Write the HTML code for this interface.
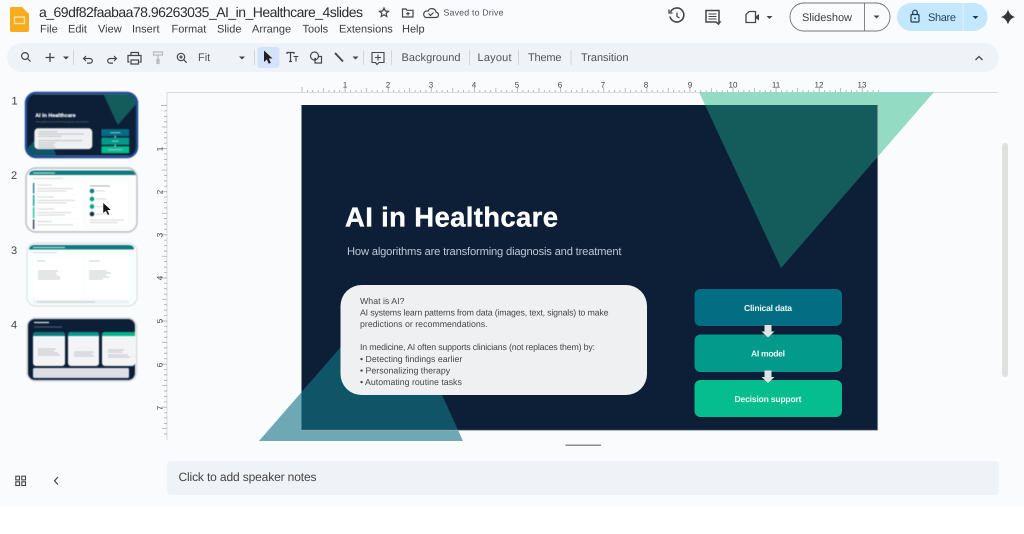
<!DOCTYPE html>
<html><head><meta charset="utf-8"><style>
html,body{margin:0;padding:0;background:#fff;width:1024px;height:534px;overflow:hidden}
svg{display:block}
#root{filter:blur(.3px)}
.soft{filter:blur(.45px)}
text{font-family:"Liberation Sans",sans-serif;fill:#3c4043;text-rendering:geometricPrecision}
.i{fill:none;stroke:#444746;stroke-width:1.2}
.m{font-size:11px;fill:#3a3d40}
.t{font-size:11px;fill:#50545a}
.r{font-size:8px;fill:#444;text-anchor:middle}
.b{font-size:8.8px;fill:#44474a}
.f{font-weight:bold;font-size:8.6px;fill:#e8f6f3;text-anchor:middle}
.n{font-size:12px;fill:#444}
</style></head><body>
<svg id="root" width="1024" height="534" viewBox="0 0 1024 534" xmlns="http://www.w3.org/2000/svg">
<defs>
<pattern id="hr" x="301.5" y="87" width="43.1" height="6" patternUnits="userSpaceOnUse">
<path d="M.5 0V5M5.900 3V5M11.300 3V5M16.700 3V5M22 1V5M27.400 3V5M32.800 3V5M38.200 3V5" stroke="#9a9da0" stroke-width=".7"/>
</pattern>
<pattern id="vr" x="161" y="105" width="6" height="43.1" patternUnits="userSpaceOnUse">
<path d="M0 .5H6M3 5.900H6M3 11.300H6M3 16.700H6M1 22H6M3 27.400H6M3 32.800H6M3 38.200H6" stroke="#9a9da0" stroke-width=".7"/>
</pattern>
<clipPath id="sl"><rect x="301.500" y="105" width="576" height="325"/></clipPath>
<clipPath id="c1"><rect x="0" y="0" width="576" height="325" rx="36"/></clipPath>
</defs>
<rect width="1024" height="507" fill="#f9fbfd"/>

<!-- logo -->
<path d="M10 8.500Q10 7 11.500 7H22L29 14V30Q29 32 27 32H12Q10 32 10 30Z" fill="#f7ab1e"/>
<rect x="14.500" y="17" width="10" height="6.500" fill="none" stroke="#fde3a5" stroke-width="1.400"/>

<!-- title -->
<text x="39" y="17" font-size="14" textLength="324" style="fill:#2a2c2e">a_69df82faabaa78.96263035_AI_in_Healthcare_4slides</text>
<path d="M384 8l1.300 3 3.200.3-2.400 2.100.7 3.100-2.800-1.700-2.800 1.700.7-3.100-2.400-2.100 3.200-.3z" class="i"/>
<path d="M402.500 9h3.500l1 1.300h6v6.700h-10.500z" class="i"/><path d="M408 12v3.500M406.200 13.700h3.600" class="i" stroke-width="1"/>
<path d="M426 17.500h9.500a2.700 2.700 0 0 0 .5-5.400 4.200 4.200 0 0 0-8-1 3.300 3.300 0 0 0-2 6.400zM428.500 13.500l2 2 3-3" class="i" stroke-width="1"/>
<text x="443.500" y="15.500" font-size="8.800" textLength="60" style="fill:#50545a">Saved to Drive</text>

<!-- menus -->
<text class="m" x="40" y="32.500">File</text>
<text class="m" x="68" y="32.500">Edit</text>
<text class="m" x="98" y="32.500">View</text>
<text class="m" x="132" y="32.500">Insert</text>
<text class="m" x="171.500" y="32.500">Format</text>
<text class="m" x="217" y="32.500">Slide</text>
<text class="m" x="252" y="32.500">Arrange</text>
<text class="m" x="302.500" y="32.500">Tools</text>
<text class="m" x="339" y="32.500">Extensions</text>
<text class="m" x="402" y="32.500">Help</text>

<!-- top right -->
<g fill="none" stroke="#444746" stroke-width="1.600">
<path d="M670.500 12a7 7 0 1 1-.5 4.500"/><path d="M669 9.500v3.500h3.500" stroke-width="1.300"/><path d="M677 12.500v4l2.500 1.500" stroke-width="1.300"/>
<path d="M706 10.500h13v11.500h1l-1.500 2-2.500-2h-10z" stroke-width="1.500"/><path d="M708.500 14h8M708.500 16.500h8M708.500 19h8" stroke-width="1"/>
<path d="M749 11.500h6.500v11h-9.500v-8z" stroke-width="1.300"/></g>
<path d="M755.500 16.500l3.500-2.500v6.500l-3.500-2.500z" fill="#444746"/>
<path d="M766.500 16l3 3 3-3z" fill="#444746"/>
<rect x="790" y="3" width="100" height="28" rx="14" fill="#f9fbfd" stroke="#747775" stroke-width=".9"/>
<path d="M864.500 3v28" stroke="#747775" stroke-width=".9"/>
<text x="802" y="21" font-size="11" textLength="50" style="fill:#3c4043">Slideshow</text>
<path d="M873.500 15.500l3 3 3-3z" fill="#444746"/>
<rect x="897" y="3" width="90.500" height="28" rx="14" fill="#c2e7ff"/>
<path d="M963 3v28" stroke="#e6f4ff" stroke-width=".9"/>
<rect x="911" y="14.500" width="8" height="7.500" rx="1" fill="none" stroke="#1f3b52" stroke-width="1.200"/>
<path d="M912.700 14.500v-2a2.300 2.300 0 0 1 4.600 0v2" fill="none" stroke="#1f3b52" stroke-width="1.200"/>
<circle cx="915" cy="18.300" r=".9" fill="#1f3b52"/>
<text x="928" y="21" font-size="11" textLength="28" style="fill:#26455c">Share</text>
<path d="M972.500 16l3 3 3-3z" fill="#1f3b52"/>
<path d="M1008 9.500c1.200 4 3.200 6.200 7 7.500-3.800 1.300-5.800 3.500-7 7.500-1.200-4-3.200-6.200-7-7.500 3.800-1.300 5.800-3.500 7-7.500z" fill="#33363a"/>

<!-- toolbar -->
<rect x="7" y="43" width="992" height="29" rx="14.500" fill="#eff3f8"/>
<rect x="257.500" y="47" width="22" height="21" rx="3" fill="#d3e3fd"/>
<g fill="none" stroke="#444746" stroke-width="1.200">
<circle cx="25" cy="56" r="3.400"/><path d="M27.500 58.500l3 3"/>
<path d="M45.500 57.500h9M50 53v9" stroke-width="1.300"/>
<path d="M84 58.500h6a2.300 2.300 0 0 1 0 4.600h-3M86 56l-2.500 2.500 2.500 2.500"/>
<path d="M116 58.500h-6a2.300 2.300 0 0 0 0 4.600h3M114 56l2.500 2.500-2.500 2.500"/>
<path d="M131 55.500v-3h7.500v3M129.500 62h-1.500v-6.500h13v6.500h-1.500M131 60h7.500v4h-7.500z"/>
<path d="M153.500 52h9v3h-9zM158 55v2.500M158 57.500v5" stroke="#b6b9bd"/><rect x="157" y="59.500" width="2" height="4" stroke="#b6b9bd"/>
<circle cx="181" cy="57" r="3.700"/><path d="M183.700 59.700l3 3M179.300 57h3.400M181 55.300v3.400"/>
<path d="M287 54v-1.500h7v1.500M290.500 52.500v9M289 61.500h3" stroke-width="1.200"/><path d="M293.500 56.500h4.800M296 56.500v5" stroke-width="1.100"/>
<circle cx="314.500" cy="56" r="4"/><path d="M316 58.500h-1v4.500h6.500v-6.500h-2.500"/>
<path d="M335 53l8 8.500" stroke-width="1.900"/>
<path d="M372 52.500h12v10h-5l-2 2-1.500-2h-3.500zM378 54.500v6M375 57.500h6" stroke-width="1.100"/>
<path d="M975.500 60l3.500-3.500 3.500 3.500" stroke-width="1.300"/>
</g>
<path d="M63 56.500l3 3 3-3zM239 56.500l3 3 3-3zM352.500 56.500l3 3 3-3z" fill="#444746"/>
<path d="M264 51l0 11.500 2.800-2.600 2 4.300 2-1-2-4.200h3.700z" fill="#1f1f1f" transform="translate(0,-.5)"/>
<g stroke="#d3d6da" stroke-width="1"><path d="M73.500 50v15M254.500 50v15M363.500 50v15M391.500 50v15M469.500 50v15M518.500 50v15M571 50v15"/></g>
<text class="t" x="198" y="61">Fit</text>
<text class="t" x="401.500" y="61" textLength="59">Background</text>
<text class="t" x="477.500" y="61" textLength="34">Layout</text>
<text class="t" x="528" y="61" textLength="33.500">Theme</text>
<text class="t" x="581" y="61" textLength="47.500">Transition</text>

<!-- rulers -->
<path d="M167 92.500H998M167 92v348" stroke="#d8dadd" stroke-width="1" fill="none"/>
<rect x="301.500" y="87" width="578" height="5" fill="url(#hr)"/>
<rect x="161" y="105" width="6" height="332" fill="url(#vr)"/>
<g>
<text class="r" x="345" y="87.500">1</text><text class="r" x="388" y="87.500">2</text><text class="r" x="431" y="87.500">3</text><text class="r" x="474" y="87.500">4</text><text class="r" x="517" y="87.500">5</text><text class="r" x="560" y="87.500">6</text><text class="r" x="603" y="87.500">7</text><text class="r" x="646" y="87.500">8</text><text class="r" x="690" y="87.500">9</text><text class="r" x="733" y="87.500">10</text><text class="r" x="776" y="87.500">11</text><text class="r" x="819" y="87.500">12</text><text class="r" x="862" y="87.500">13</text>
<text class="r" transform="translate(162.500,149) rotate(-90)">1</text><text class="r" transform="translate(162.500,192) rotate(-90)">2</text><text class="r" transform="translate(162.500,235) rotate(-90)">3</text><text class="r" transform="translate(162.500,278) rotate(-90)">4</text><text class="r" transform="translate(162.500,321) rotate(-90)">5</text><text class="r" transform="translate(162.500,365) rotate(-90)">6</text><text class="r" transform="translate(162.500,408) rotate(-90)">7</text>
</g>

<!-- scrollbar -->
<rect x="1002" y="143" width="6" height="234" rx="3" fill="#dfe1de"/>

<!-- main slide -->
<polygon points="699,92 934,92 781,268" fill="#93dcc3"/>
<polygon points="259,441 463,441 393,287" fill="#6fa8b5"/>
<g clip-path="url(#sl)">
<rect x="301.500" y="105" width="576" height="325" fill="#0c1f36"/>
<polygon points="699,92 934,92 781,268" fill="#145c5c"/>
<polygon points="259,441 463,441 393,287" fill="#0f5567"/>
</g>
<path d="M877.700 105v325.300H301.500" fill="none" stroke="#9aa3ab" stroke-width=".8"/>
<text x="345" y="226.500" font-size="27.500" font-weight="bold" textLength="213" style="fill:#fff;stroke:#fff;stroke-width:.35">AI in Healthcare</text>
<text x="347" y="255" font-size="11.200" textLength="274.500" style="fill:#bcc8d6">How algorithms are transforming diagnosis and treatment</text>
<rect x="340.500" y="285" width="306.500" height="110" rx="21" fill="#eff0f2"/>
<text class="b" x="360" y="304">What is AI?</text>
<text class="b" x="360" y="315.500" textLength="248.500">AI systems learn patterns from data (images, text, signals) to make</text>
<text class="b" x="360" y="327">predictions or recommendations.</text>
<text class="b" x="360" y="350" textLength="235">In medicine, AI often supports clinicians (not replaces them) by:</text>
<text class="b" x="360" y="362">• Detecting findings earlier</text>
<text class="b" x="360" y="373.500">• Personalizing therapy</text>
<text class="b" x="360" y="385">• Automating routine tasks</text>
<rect x="694.500" y="289" width="147.500" height="37" rx="6" fill="#036e83"/>
<rect x="694.500" y="334.500" width="147.500" height="37.500" rx="6" fill="#029a8a"/>
<rect x="694.500" y="380" width="147.500" height="37" rx="6" fill="#06bd8f"/>
<path d="M764.500 325h7v6.500h3l-6.500 6-6.500-6h3z" fill="#dfe3e6"/>
<path d="M764.500 370.500h7v6.500h3l-6.500 6-6.500-6h3z" fill="#dfe3e6"/>
<text class="f" x="768" y="311" textLength="48">Clinical data</text>
<text class="f" x="768" y="356.500" textLength="34">AI model</text>
<text class="f" x="768" y="402" textLength="67">Decision support</text>

<rect x="565.500" y="444.500" width="35.500" height="1.500" fill="#8b8d90"/>

<!-- thumbnails -->
<text x="11.500" y="104.500" font-size="11" style="fill:#444">1</text>
<text x="11" y="179" font-size="11" style="fill:#444">2</text>
<text x="11" y="254" font-size="11" style="fill:#444">3</text>
<text x="11" y="328.500" font-size="11" style="fill:#444">4</text>

<g class="soft">
<!-- thumb 1 -->
<svg x="27" y="94" width="109" height="62" viewBox="0 0 576 325">
<g clip-path="url(#c1)">
<rect width="576" height="325" fill="#0c1f36"/>
<polygon points="398,-13 633,-13 480,163" fill="#145c5c"/>
<polygon points="-42,336 162,336 92,182" fill="#0f5567"/>
<rect x="39" y="180" width="306" height="110" rx="20" fill="#eff0f2"/>
<text x="44" y="121" font-size="27.500" font-weight="bold" textLength="213" style="fill:#fff;stroke:#fff;stroke-width:1">AI in Healthcare</text>
<text x="46" y="150" font-size="11" style="fill:#7f8d9c">How algorithms are transforming diagnosis and treatment</text>
<path d="M60 198h100M60 210h240M60 222h120M60 245h230M60 257h90M60 269h80M60 280h90" stroke="#b0b2b6" stroke-width="4"/>
<rect x="393" y="184" width="147" height="37" rx="4" fill="#036e83"/>
<rect x="393" y="229" width="147" height="38" rx="4" fill="#029a8a"/>
<rect x="393" y="275" width="147" height="37" rx="4" fill="#06bd8f"/>
<path d="M440 203h54M448 248h36M430 293h74" stroke="#a9d8d2" stroke-width="5"/>
<path d="M466 220v10M466 266v10" stroke="#dfe3e6" stroke-width="6"/>
</g></svg>
<rect x="26" y="93" width="111" height="64" rx="10" fill="none" stroke="#1f4a94" stroke-width="2.400"/>
<!-- thumb 2 -->
<rect x="28" y="170" width="108" height="61" rx="7" fill="#fbfdfd"/>
<path d="M29 175q.5-4.500 6-4.500h95q5.500 0 6 4.500z" fill="#0f7a7d"/>
<path d="M33 173h22" stroke="#cfeee6" stroke-width="1"/>
<path d="M33 178.500h30" stroke="#ccd0d3" stroke-width=".8"/>
<rect x="33" y="183" width="50" height="10.500" fill="#fff"/><rect x="33" y="183" width="1.300" height="10.500" fill="#0f7a7d"/>
<rect x="33" y="195" width="50" height="11" fill="#fff"/><rect x="33" y="195" width="1.300" height="11" fill="#059a8c"/>
<rect x="33" y="207" width="50" height="11" fill="#fff"/><rect x="33" y="207" width="1.300" height="11" fill="#06bd8f"/>
<rect x="33" y="219.500" width="50" height="9.500" fill="#fff"/><rect x="33" y="219.500" width="1.300" height="9.500" fill="#1a2c40"/>
<path d="M37 185h15M37 188.500h36M37 191h30M37 197h17M37 200.500h38M37 203h30M37 209h17M37 212.500h34M37 215h28M37 221.500h15M37 225h36" stroke="#c6c9cc" stroke-width=".8"/>
<rect x="88" y="183" width="40" height="42" rx="3" fill="#fff"/>
<path d="M90 186h20" stroke="#8a8d90" stroke-width=".8"/>
<path d="M92 190v26" stroke="#cfd6d6" stroke-width=".6"/>
<circle cx="92" cy="191" r="2.300" fill="#0f7a7d"/><circle cx="92" cy="199" r="2.300" fill="#059a8c"/><circle cx="92" cy="206.500" r="2.300" fill="#06a58c"/><circle cx="92" cy="214" r="2.300" fill="#1a2c40"/>
<path d="M96 191h9M96 199h10M96 206.500h8M96 214h12M90 220h34M90 222.500h28" stroke="#c6c9cc" stroke-width=".8"/>
<rect x="26" y="168" width="111" height="64" rx="10" fill="none" stroke="#b9bcc0" stroke-width="1.400"/>
<!-- thumb 3 -->
<rect x="27" y="243" width="110" height="63" rx="9" fill="#fafdfd" stroke="#d8dcdf" stroke-width="1"/>
<path d="M29 249.500q.5-4.500 6-4.500h93q6 0 6 4.500z" fill="#0f7a7d"/>
<path d="M33 247.500h32" stroke="#cfeee6" stroke-width="1"/>
<path d="M33 252.500h24" stroke="#cdd1d4" stroke-width=".8"/>
<rect x="33" y="257" width="50" height="41" rx="4" fill="#fff"/>
<rect x="85" y="257" width="44" height="41" rx="4" fill="#fff"/>
<rect x="33" y="300" width="96" height="4" fill="#e9f5f4"/>
<path d="M37 261h8M38 271h20M38 273h18M38 275h19M38 277h22M38 279h22M89 261h11M89 271h18M89 273h22M89 275h17M89 277h20M89 279h14" stroke="#b8bcc0" stroke-width=".8"/>
<path d="M37 302h58" stroke="#b4bbbd" stroke-width=".8"/>
<!-- thumb 4 -->
<svg x="28" y="319" width="107" height="61" viewBox="0 0 107 61">
<rect width="107" height="61" rx="7" fill="#0c1f36"/>
<rect x="5" y="13" width="32" height="34" rx="3" fill="#f3f4f6"/><path d="M5 16q0-3 3-3h26q3 0 3 3v1h-32z" fill="#0c7a80"/>
<rect x="40" y="13" width="31" height="34" rx="3" fill="#f3f4f6"/><path d="M40 16q0-3 3-3h25q3 0 3 3v1h-31z" fill="#059a8c"/>
<rect x="74" y="13" width="33" height="34" rx="3" fill="#f3f4f6"/><path d="M74 16q0-3 3-3h30v4h-33z" fill="#06b58f"/>
<rect x="5" y="49" width="96" height="10" rx="1.500" fill="#dcdfe6"/>
<path d="M6 3.500h15" stroke="#e8eef2" stroke-width="1.200"/><path d="M6 8h28" stroke="#66788a" stroke-width=".7"/>
<path d="M10 30h18M10 32h16M10 34h20M10 36h22M46 33h20M46 35h18M46 37h20M80 31h16M80 33h14M80 36h20M80 38h22" stroke="#b0b3b8" stroke-width=".7"/>
</svg>
<rect x="27" y="318" width="109.500" height="63" rx="9" fill="none" stroke="#d0d3d7" stroke-width="1.200"/>
</g>
<!-- cursor -->
<path d="M103 202.500v11l2.800-2.400 2 4.100 1.800-.9-2-4h3.800z" fill="#111" stroke="#fff" stroke-width=".5"/>

<!-- notes -->
<rect x="167" y="461" width="832" height="34" rx="4" fill="#eff2f7"/>
<text class="n" x="178.500" y="481" textLength="138">Click to add speaker notes</text>

<!-- bottom icons -->
<g fill="none" stroke="#444746" stroke-width="1.100">
<rect x="15.800" y="476.200" width="3.700" height="3.700"/><rect x="21.800" y="476.200" width="3.700" height="3.700"/><rect x="15.800" y="481.800" width="3.700" height="3.700"/><rect x="21.800" y="481.800" width="3.700" height="3.700"/>
<path d="M58 477l-3.500 3.800 3.500 3.800" stroke-width="1.200"/>
</g>
</svg>
</body></html>
